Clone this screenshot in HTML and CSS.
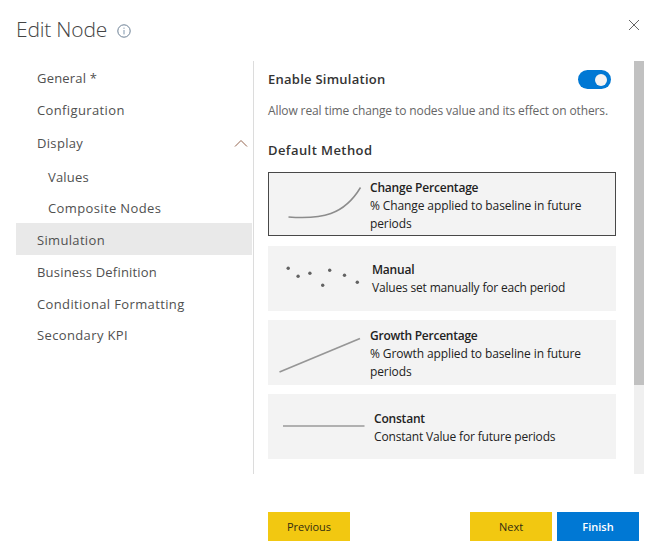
FILE: index.html
```html
<!DOCTYPE html>
<html lang="en">
<head>
<meta charset="utf-8">
<title>Edit Node</title>
<link rel="stylesheet" href="styles.css">
</head>
<body>
<div class="dialog">
  <header class="header">
    <h1 class="title">Edit Node</h1>
    <svg class="info" width="14" height="14" viewBox="0 0 14 14" fill="none"><circle cx="7" cy="7" r="6.2" stroke="#6b7f94"/><path d="M7 6v4.400M7 3.600v1.200" stroke="#7e96ad"/></svg>
    <svg class="close" width="12" height="12" viewBox="0 0 12 12"><path d="M1 1l10 10M11 1L1 11" stroke="#666" fill="none"/></svg>
  </header>
  <div class="main">
    <nav class="nav">
      <a class="item h33 tight"><span>General *</span></a>
      <a class="item loose"><span>Configuration</span></a>
      <a class="item h34"><span>Display</span><svg class="chevron" width="14" height="9" viewBox="0 0 14 9"><path d="M1 7.500l6-6 6 6" fill="none" stroke="#94644e"/></svg></a>
      <a class="item sub h33 tight"><span>Values</span></a>
      <a class="item sub h30 loose"><span>Composite Nodes</span></a>
      <a class="item selected"><span>Simulation</span></a>
      <a class="item h33 tight"><span>Business Definition</span></a>
      <a class="item loose"><span>Conditional Formatting</span></a>
      <a class="item h30 loose"><span>Secondary KPI</span></a>
    </nav>
    <section class="content">
      <div class="toggle-row"><h2 class="heading">Enable Simulation</h2><span class="toggle"><i class="knob"></i></span></div>
      <p class="hint">Allow real time change to nodes value and its effect on others.</p>
      <h2 class="heading method">Default Method</h2>
      <div class="cards">
        <div class="card active">
          <svg class="art" width="100" height="64" viewBox="0 0 100 64"><path d="M20.500 45C54 47.500 76 43 92.500 15.500" fill="none" stroke="#8c8c8c" stroke-width="1.500"/></svg>
          <div class="text"><b>Change Percentage</b><span>% Change applied to baseline in future<br>periods</span></div>
        </div>
        <div class="card manual">
          <svg class="art" width="100" height="64" viewBox="0 0 100 64" fill="#626262"><circle cx="20.200" cy="22.200" r="1.700"/><circle cx="30.100" cy="30.200" r="1.700"/><circle cx="41.900" cy="27.300" r="1.700"/><circle cx="61.700" cy="24.300" r="1.700"/><circle cx="54.700" cy="39.200" r="1.700"/><circle cx="76.500" cy="29.200" r="1.700"/><circle cx="89.300" cy="36.200" r="1.700"/></svg>
          <div class="text"><b>Manual</b><span>Values set manually for each period</span></div>
        </div>
        <div class="card growth">
          <svg class="art" width="100" height="64" viewBox="0 0 100 64"><path d="M11.500 52L92 18.500" stroke="#969696" stroke-width="1.700"/></svg>
          <div class="text"><b>Growth Percentage</b><span>% Growth applied to baseline in future<br>periods</span></div>
        </div>
        <div class="card constant">
          <svg class="art" width="100" height="64" viewBox="0 0 100 64"><path d="M15 32H96.500" stroke="#b0b0b0" stroke-width="2"/></svg>
          <div class="text"><b>Constant</b><span>Constant Value for future periods</span></div>
        </div>
      </div>
    </section>
    <div class="scrollbar"><div class="thumb"></div></div>
  </div>
  <footer class="footer">
    <button class="btn previous">Previous</button>
    <button class="btn">Next</button>
    <button class="btn primary">Finish</button>
  </footer>
</div>
</body>
</html>
```
FILE: styles.css
```css
* { box-sizing: border-box; }
body { margin: 0; background: #fff; font-family: "Open Sans", "Noto Sans", sans-serif; color: #222; }
h1, h2, p { margin: 0; }
svg { display: block; flex: none; }
.dialog { width: 658px; height: 554px; overflow: hidden; }
.header { height: 61px; display: flex; align-items: flex-start; padding: 0 18px 0 16px; }
.title { font-size: 21px; font-weight: 300; letter-spacing: -.2px; line-height: 30px; margin-top: 14px; color: #444; white-space: nowrap; width: 101px; }
.info { margin-top: 24px; }
.close { margin: 19px 0 0 auto; }
.main { height: 413px; display: flex; padding-left: 16px; }
.nav { width: 238px; border-right: 1px solid #dcdcdc; flex: none; }
.item { height: 32px; display: flex; align-items: center; padding-left: 21px; margin-right: 1px; font-size: 13px; letter-spacing: .33px; color: #505050; white-space: nowrap; }
.tight { letter-spacing: .2px; }
.loose { letter-spacing: .37px; }
.h30 { height: 30px; }
.h33 { height: 33px; }
.h34 { height: 34px; }
.sub { padding-left: 32px; }
.selected { background: #e9e9e9; padding-top: 1px; }
.chevron { margin: 0 4px 0 auto; }
.content { width: 362px; flex: none; padding-left: 14px; }
.toggle-row { display: flex; align-items: center; height: 37px; }
.heading { font-size: 13px; font-weight: 600; letter-spacing: .25px; line-height: 20px; color: #333; white-space: nowrap; }
.toggle-row .heading { margin-top: -2px; }
.toggle { width: 33px; height: 19px; border-radius: 10px; background: #0078d4; display: flex; align-items: center; justify-content: flex-end; padding-right: 4px; margin: 0 5px 0 auto; }
.knob { width: 12px; height: 12px; border-radius: 50%; background: #f3f3f3; }
.hint { font-size: 12px; letter-spacing: -.11px; line-height: 20px; margin-top: 3px; color: #666; white-space: nowrap; }
.heading.method { margin-top: 19px; letter-spacing: .42px; }
.cards { display: grid; gap: 9px; margin-top: 12px; grid-auto-rows: 65px; }
.card { display: flex; align-items: center; width: 347.500px; background: #f3f3f3; }
.active { height: 64px; border: 1px solid #484848; }
.art { margin-top: -1px; }
.active .art { margin: 0 0 0 -1px; }
.text { font-size: 12px; letter-spacing: -.11px; line-height: 18px; padding: 3px 0 0 2px; white-space: nowrap; color: #222; }
.text b, .text span { display: block; }
.text b { font-weight: 600; letter-spacing: -.2px; }
.manual .text { padding: 1px 0 0 4px; letter-spacing: -.18px; }
.growth .text { padding-top: 2px; }
.growth .text b { letter-spacing: -.25px; }
.constant .text { padding: 2px 0 0 6px; letter-spacing: -.17px; }
.scrollbar { width: 10px; margin-left: 18px; background: #f0f0f0; }
.thumb { height: 324px; background: #c1c1c1; }
.footer { display: flex; gap: 5px; padding: 38px 19px 0 268px; }
.btn { width: 82px; height: 29px; border: 0; padding: 0; background: #f2c811; font: 11px "Open Sans", sans-serif; color: #332d12; }
.previous { margin-right: auto; }
.primary { background: #0078d4; color: #fff; font-weight: 600; }
```
